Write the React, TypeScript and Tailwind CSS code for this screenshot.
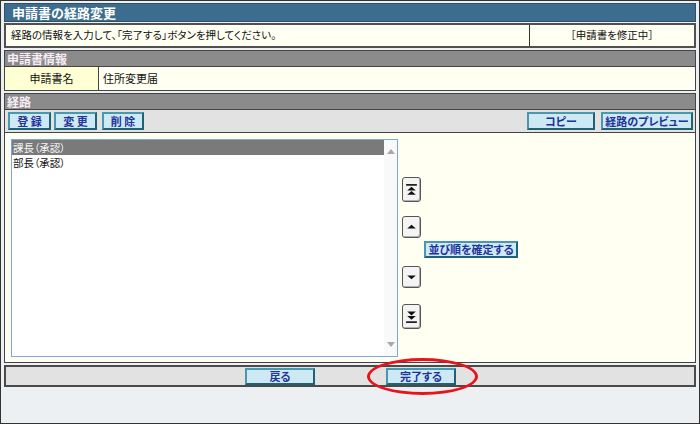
const font = { fontFamily: '"Noto Sans CJK JP", "Noto Sans", sans-serif' };

const btn =
  "flex items-center justify-center border-2 border-[#4a98ae] border-b-[#1f6175] border-r-[#1f6175] bg-[#cdeaf4] text-[11px] font-bold leading-none text-[#23329a] [font-feature-settings:'palt']";

const arrowBtn =
  "flex w-[19px] items-center justify-center rounded-[3px] border border-[#555] bg-[#f4f4f4] shadow-[inset_-1px_-1px_0_#b0b0b0]";

function ArrowIcon({ kind }: { kind: "top" | "up" | "down" | "bottom" }) {
  return (
    <svg width="11" height="14" viewBox="0 0 10 13" fill="#111">
      {kind === "top" && (
        <>
          <rect x="0" y="1" width="10" height="1.5" />
          <path d="M5 3.5 L9 7 L1 7 Z" />
          <path d="M5 7.5 L9 11 L1 11 Z" />
        </>
      )}
      {kind === "up" && <path d="M5 4.5 L9 8 L1 8 Z" />}
      {kind === "down" && <path d="M1 5 L9 5 L5 8.5 Z" />}
      {kind === "bottom" && (
        <>
          <path d="M1 1.5 L9 1.5 L5 5 Z" />
          <path d="M1 5.5 L9 5.5 L5 9 Z" />
          <rect x="0" y="10.5" width="10" height="1.5" />
        </>
      )}
    </svg>
  );
}

export default function App() {
  return (
    <div
      style={font}
      className="relative h-[424px] w-[700px] overflow-hidden border border-[#333] bg-[#edf0f3] px-[3px] pt-[2px] text-[#111]"
    >
      {/* title */}
      <div className="flex h-[19px] items-center border border-[#2e4f66] bg-[#3c6d8e] pl-[7px] text-[13px] font-bold leading-none text-white">
        申請書の経路変更
      </div>

      {/* message */}
      <div className="mt-px flex h-[25px] border-2 border-[#505050] bg-[#fffff2] text-[10.5px] leading-none [font-feature-settings:'palt']">
        <div className="flex flex-1 items-center pl-[5px]">
          経路の情報を入力して、「完了する」ボタンを押してください。
        </div>
        <div className="flex w-[165px] items-center justify-center border-l border-[#333]">
          ［申請書を修正中］
        </div>
      </div>

      {/* 申請書情報 */}
      <div className="mt-[2px] border border-[#444]">
        <div className="flex h-[16px] items-center border-b border-[#444] bg-[#8b8b8b] pl-[2px] text-[12px] font-bold leading-none text-[#f6ecf6]">
          申請書情報
        </div>
        <div className="flex h-[23px] bg-[#fffff2] text-[11px] leading-none">
          <div className="flex w-[94px] items-center justify-center border-r border-[#444] bg-[#ffffd4]">
            申請書名
          </div>
          <div className="flex items-center pl-[4px]">住所変更届</div>
        </div>
      </div>

      {/* 経路 */}
      <div className="mt-[2px] border border-[#444]">
        <div className="flex h-[16px] items-center border-b border-[#444] bg-[#8b8b8b] pl-[2px] text-[12px] font-bold leading-none text-[#f6ecf6]">
          経路
        </div>
        <div className="flex h-[23px] items-center border-b border-[#444] bg-[#e2e2e2] pl-[3px] pr-[2px]">
          <div className={`${btn} h-[18px] w-[43px]`}>登&nbsp;録</div>
          <div className={`${btn} ml-[3px] h-[18px] w-[43px]`}>変&nbsp;更</div>
          <div className={`${btn} ml-[5px] h-[18px] w-[42px]`}>削&nbsp;除</div>
          <div className={`${btn} ml-auto h-[18px] w-[68px]`}>コピー</div>
          <div className={`${btn} ml-[6px] h-[18px] w-[92px]`}>経路のプレビュー</div>
        </div>
        <div className="flex h-[229px] bg-[#fffff2] pl-[6px] pt-[6px]">
          {/* list */}
          <div className="flex h-[218px] w-[387px] border border-[#7ba6e6] bg-white">
            <div className="flex-1 text-[10.5px] leading-[15px] [font-feature-settings:'palt']">
              <div className="h-[15px] bg-[#7a7a7a] pl-[1px] text-[#f4f4f4]">課長（承認）</div>
              <div className="h-[15px] pl-[1px]">部長（承認）</div>
            </div>
            <div className="flex w-[13px] flex-col items-center justify-between bg-[#f9f9f9] py-[9px]">
              <svg width="8" height="5" viewBox="0 0 8 5">
                <path d="M4 0 L8 5 L0 5 Z" fill="#a8a8a8" />
              </svg>
              <svg width="8" height="5" viewBox="0 0 8 5">
                <path d="M0 0 L8 0 L4 5 Z" fill="#a8a8a8" />
              </svg>
            </div>
          </div>

          {/* order controls */}
          <div className="ml-[4px] flex flex-col pt-[38px]">
            <div className={`${arrowBtn} h-[25px]`}>
              <ArrowIcon kind="top" />
            </div>
            <div className={`${arrowBtn} mt-[14px] h-[22px]`}>
              <ArrowIcon kind="up" />
            </div>
            <div className={`${arrowBtn} mt-[28px] h-[22px]`}>
              <ArrowIcon kind="down" />
            </div>
            <div className={`${arrowBtn} mt-[16px] h-[25px]`}>
              <ArrowIcon kind="bottom" />
            </div>
          </div>
          <div className="ml-[3px] pt-[102px]">
            <div className={`${btn} h-[17px] w-[94px]`}>並び順を確定する</div>
          </div>
        </div>
      </div>

      {/* bottom bar */}
      <div className="mt-[2px] flex h-[22px] items-center border-2 border-[#4a4a4a] bg-[#e2e2e2] pl-[239px]">
        <div className={`${btn} h-[17px] w-[70px]`}>戻る</div>
        <div className={`${btn} ml-[71px] h-[17px] w-[70px]`}>完了する</div>
      </div>

      {/* red highlight */}
      <div className="absolute left-[366px] top-[357px] h-[37px] w-[111px] rounded-[50%] border-[3px] border-[#e8141c]" />
    </div>
  );
}
